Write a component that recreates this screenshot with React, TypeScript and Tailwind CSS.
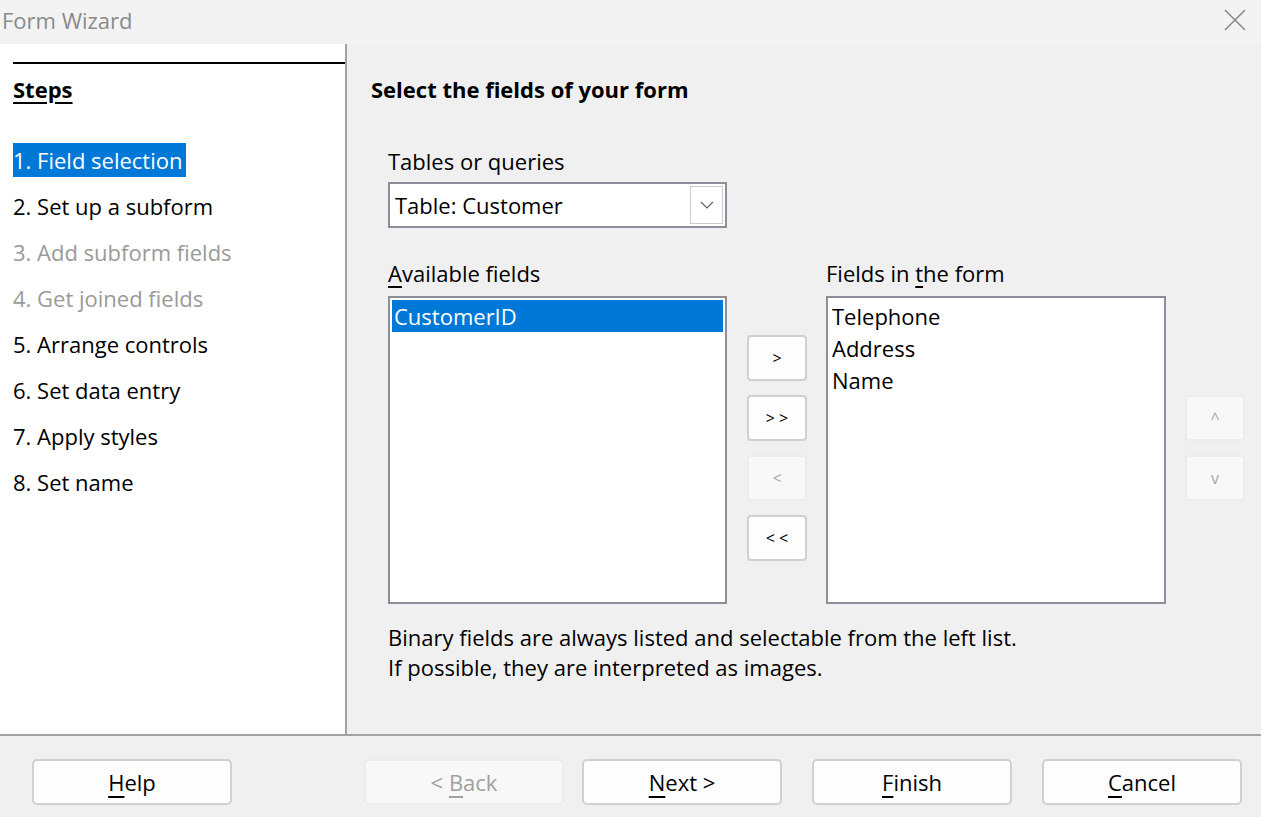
const font = { fontFamily: '"Open Sans", "Noto Sans", sans-serif' };

const steps = [
  { label: '1. Field selection', state: 'active' },
  { label: '2. Set up a subform', state: 'normal' },
  { label: '3. Add subform fields', state: 'disabled' },
  { label: '4. Get joined fields', state: 'disabled' },
  { label: '5. Arrange controls', state: 'normal' },
  { label: '6. Set data entry', state: 'normal' },
  { label: '7. Apply styles', state: 'normal' },
  { label: '8. Set name', state: 'normal' },
];

function SmallButton({ label, disabled }: { label: string; disabled?: boolean }) {
  return (
    <button
      className={`w-[60px] h-[46px] rounded-[4px] border-2 text-[16px] flex items-center justify-center ${
        disabled ? 'border-[#ececec] bg-[#f8f8f8] text-[#a0a8b8]' : 'border-[#d0d0d0] bg-[#fdfdfd] text-black'
      }`}
    >
      {label}
    </button>
  );
}

function BottomButton({ pre, u, post, disabled }: { pre?: string; u: string; post?: string; disabled?: boolean }) {
  return (
    <button
      className={`w-[200px] h-[46px] rounded-[5px] border-2 text-[22px] flex items-center justify-center ${
        disabled ? 'border-[#ececec] bg-[#f8f8f8] text-[#a0a0a0]' : 'border-[#d0d0d0] bg-[#fdfdfd] text-black'
      }`}
    >
      <span>
        {pre}
        <span className="underline underline-offset-[5px]">{u}</span>
        {post}
      </span>
    </button>
  );
}

export default function App() {
  return (
    <div className="w-[1261px] h-[817px] flex flex-col bg-[#f0f0f0] overflow-hidden" style={font}>
      {/* title bar */}
      <div className="h-[44px] bg-[#f3f3f3] flex items-center justify-between pl-[2px] pr-[15px] pb-[4px]">
        <span className="text-[22px] text-[#8a8a8a]">Form Wizard</span>
        <svg width="22" height="22" viewBox="0 0 22 22" stroke="#8a8a8a" strokeWidth="1.6">
          <path d="M1 1l20 20M21 1L1 21" />
        </svg>
      </div>

      <div className="flex flex-1">
        {/* steps pane */}
        <div className="w-[345px] bg-white pt-[18px] pl-[13px]">
          <div className="border-t-2 border-black" />
          <div className="mt-[8px] text-[22px] font-bold underline underline-offset-[4px] text-black leading-[34px]">
            Steps
          </div>
          <div className="mt-[37px] flex flex-col gap-[12px]">
            {steps.map((s) => (
              <div key={s.label} className="h-[34px] flex items-center">
                <span
                  className={`text-[22px] leading-[34px] ${
                    s.state === 'active'
                      ? 'bg-[#0078d7] text-white pr-[4px]'
                      : s.state === 'disabled'
                      ? 'text-[#9a9a9a]'
                      : 'text-black'
                  }`}
                >
                  {s.label}
                </span>
              </div>
            ))}
          </div>
        </div>
        <div className="w-[2px] bg-[#a3a3a3]" />

        {/* main pane */}
        <div className="flex-1 pl-[24px] pt-[29px]">
          <div className="text-[22px] font-bold text-black leading-[32px]">Select the fields of your form</div>
          <div className="pl-[17px] mt-[44px]">
            <div className="text-[22px] leading-[24px] text-black">Tables or queries</div>
            <div className="mt-[9px] w-[339px] h-[46px] border-2 border-[#8c8f98] bg-white flex items-center justify-between pl-[5px] pr-[2px]">
              <span className="text-[22px] text-black">Table: Customer</span>
              <div className="w-[33px] h-[38px] border border-[#c8ccd4] flex items-center justify-center">
                <svg width="14" height="8" viewBox="0 0 14 8" fill="none" stroke="#606060" strokeWidth="1.2">
                  <path d="M1 1l6 6 6-6" />
                </svg>
              </div>
            </div>

            <div className="flex mt-[33px]">
              <div className="flex flex-col">
                <div className="text-[22px] leading-[24px] text-black">
                  <span className="underline underline-offset-[4px]">A</span>vailable fields
                </div>
                <div className="mt-[11px] w-[339px] h-[308px] border-2 border-[#8c8f98] bg-white p-[2px]">
                  <div className="h-[32px] bg-[#0078d7] text-white text-[22px] leading-[32px] pl-[2px]">CustomerID</div>
                </div>
              </div>

              <div className="flex flex-col gap-[14px] ml-[20px] mt-[74px]">
                <SmallButton label=">" />
                <SmallButton label="> >" />
                <SmallButton label="<" disabled />
                <SmallButton label="< <" />
              </div>

              <div className="flex flex-col ml-[19px]">
                <div className="text-[22px] leading-[24px] text-black">
                  Fields in <span className="underline underline-offset-[4px]">t</span>he form
                </div>
                <div className="mt-[11px] w-[340px] h-[308px] border-2 border-[#8c8f98] bg-white pt-[2px] pl-[4px]">
                  {['Telephone', 'Address', 'Name'].map((f) => (
                    <div key={f} className="text-[22px] leading-[32px] text-black">
                      {f}
                    </div>
                  ))}
                </div>
              </div>

              <div className="flex flex-col gap-[14px] ml-[19px] mt-[134px]">
                <SmallButton label="^" disabled />
                <SmallButton label="v" disabled />
              </div>
            </div>

            <div className="mt-[18px] text-[22px] leading-[30px] text-black">
              <div>Binary fields are always listed and selectable from the left list.</div>
              <div>If possible, they are interpreted as images.</div>
            </div>
          </div>
        </div>
      </div>

      {/* bottom bar */}
      <div className="h-[2px] bg-[#a3a3a3]" />
      <div className="h-[81px] flex items-start pl-[32px] pt-[23px]">
        <BottomButton u="H" post="elp" />
        <div className="ml-[132px] flex gap-[18px]">
          <BottomButton pre="< " u="B" post="ack" disabled />
          <BottomButton u="N" post="ext >" />
        </div>
        <div className="ml-[30px] flex gap-[30px]">
          <BottomButton u="F" post="inish" />
          <BottomButton u="C" post="ancel" />
        </div>
      </div>
    </div>
  );
}
